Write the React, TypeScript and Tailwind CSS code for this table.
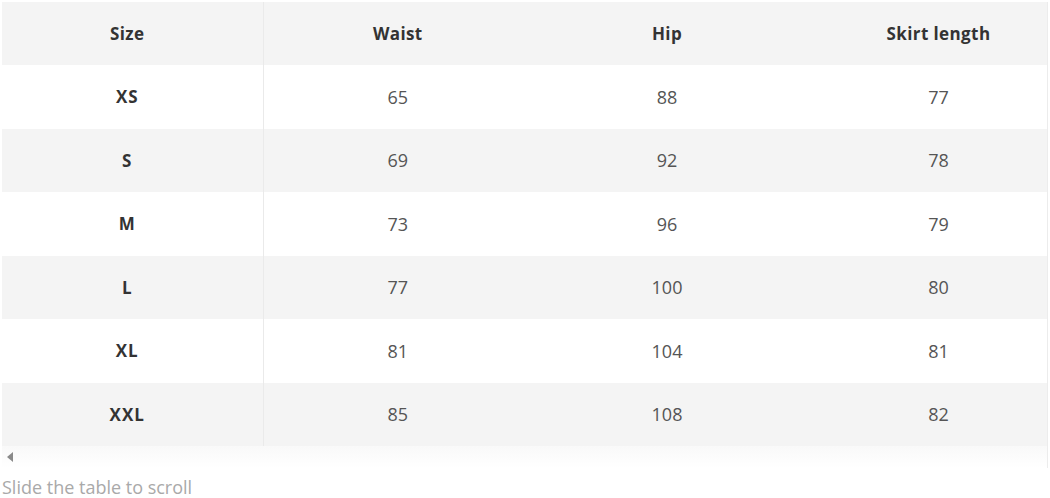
const rows = [
  ["XS", "65", "88", "77"],
  ["S", "69", "92", "78"],
  ["M", "73", "96", "79"],
  ["L", "77", "100", "80"],
  ["XL", "81", "104", "81"],
  ["XXL", "85", "108", "82"],
];

export default function App() {
  return (
    <div className="h-[498px] w-[1050px] bg-white pl-[2px] pt-[2px] font-['Open_Sans',sans-serif]">
      <div className="w-[1046px] overflow-hidden border-r border-[#ececec]">
        <table className="w-[1073px] table-fixed border-collapse">
          <colgroup>
            <col className="w-[261px]" />
            <col className="w-[269px]" />
            <col className="w-[270px]" />
            <col className="w-[273px]" />
          </colgroup>
          <thead>
            <tr className="h-[63px] bg-[#f4f4f4] text-[17px] font-bold tracking-[0.4px] text-[#333]">
              <th className="border-r border-[#eaeaea] pr-[10px] text-center">Size</th>
              <th className="text-center">Waist</th>
              <th className="text-center">Hip</th>
              <th className="text-center">Skirt length</th>
            </tr>
          </thead>
          <tbody>
            {rows.map((r, i) => (
              <tr
                key={r[0]}
                className={i % 2 === 0 ? "h-[64px] bg-white" : "h-[63px] bg-[#f4f4f4]"}
              >
                <td className="border-r border-[#eaeaea] pr-[10px] text-center text-[17px] font-bold tracking-[1px] text-[#333]">
                  {r[0]}
                </td>
                <td className="text-center text-[18px] text-[#555]">{r[1]}</td>
                <td className="text-center text-[18px] text-[#555]">{r[2]}</td>
                <td className="text-center text-[18px] text-[#555]">{r[3]}</td>
              </tr>
            ))}
          </tbody>
        </table>
        <div className="flex h-[22px] items-center bg-gradient-to-b from-[#f9f9f9] to-white pl-[4px]">
          <svg width="8" height="10" viewBox="0 0 8 10">
            <path d="M7 0 L1 5 L7 10 Z" fill="#8a8a8a" />
          </svg>
        </div>
      </div>
      <div className="pt-[8px] text-[18px] leading-[22px] text-[#a9a9a9]">Slide the table to scroll</div>
    </div>
  );
}
